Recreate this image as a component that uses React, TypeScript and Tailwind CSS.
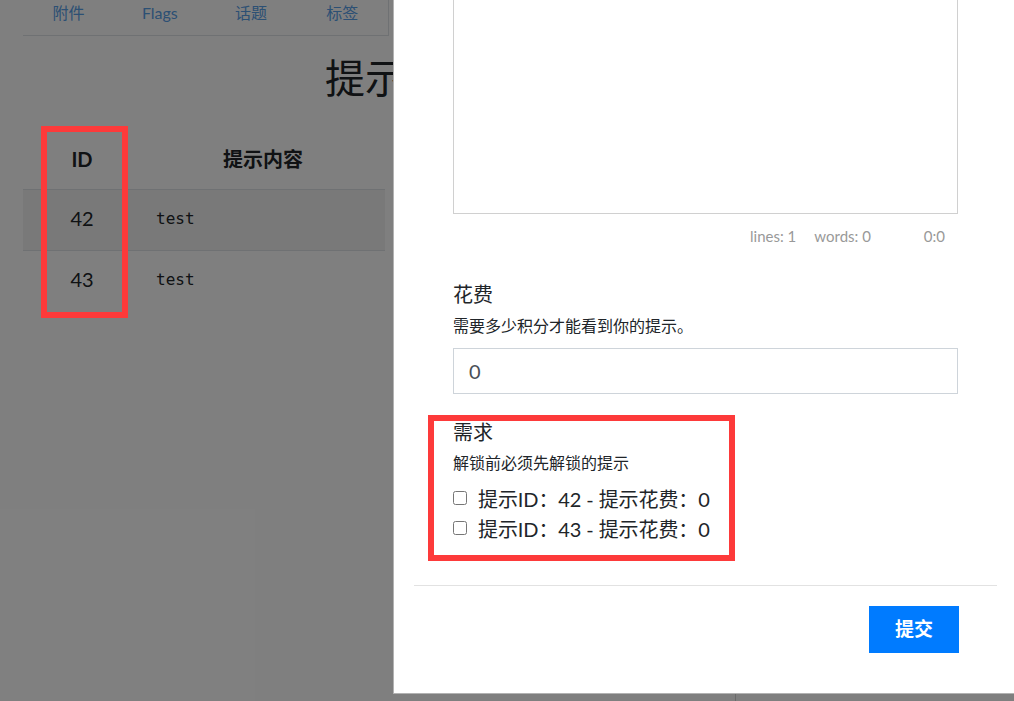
import React from "react";

const tabs = ["附件", "Flags", "话题", "标签"];
const hints = [
  { id: 42, content: "test", cost: 0 },
  { id: 43, content: "test", cost: 0 },
];

const sans = "font-['Lato','Noto_Sans_CJK_SC',sans-serif]";

export default function App() {
  return (
    <div className={`relative w-[1014px] h-[701px] overflow-hidden bg-white text-[#212529] ${sans}`}>
      {/* page behind the modal */}
      <div className="pl-[23px]">
        <div className="flex w-[366px] h-[36px] border-b border-r border-[#dee2e6]">
          {tabs.map((t) => (
            <div key={t} className="w-[91.5px] text-center text-[16px] leading-[26px] text-[#58a0e8]">
              {t}
            </div>
          ))}
        </div>
        <h1 className="mt-[20px] pl-[302px] text-[40px] leading-[44px] whitespace-nowrap">提示列表</h1>
        <table className="mt-[26px] text-[20px] border-collapse">
          <thead>
            <tr className="h-[63px] border-b border-[#dee2e6]">
              <th className="w-[118px] pt-[4px] text-center font-bold">ID</th>
              <th className="w-[244px] pt-[4px] text-center font-bold">提示内容</th>
            </tr>
          </thead>
          <tbody>
            {hints.map((h, i) => (
              <tr key={h.id} className={`h-[61px] ${i === 0 ? "bg-[#f2f2f2] border-b border-[#dee2e6]" : ""}`}>
                <td className="pb-[3px] text-center">{h.id}</td>
                <td className="pb-[1px] pl-[15px] font-['DejaVu_Sans_Mono',monospace] text-[16px]">{h.content}</td>
              </tr>
            ))}
          </tbody>
        </table>
      </div>
      <div className="absolute left-[735px] top-[690px] w-px h-[12px] bg-[#d4d4d4]" />

      {/* backdrop */}
      <div className="absolute inset-0 bg-black/50" />

      {/* modal */}
      <div className="absolute left-[393px] top-0 w-[624px] h-[694px] bg-white border-l border-b border-black/30">
        <div className="px-[59px]">
          <div className="-mt-px h-[215px] border border-[#d0d0d0]" />
          <div className="mt-[12px] flex justify-end pr-[13px] text-[15px] leading-[20px] text-[#999]">
            <span>lines: 1</span>
            <span className="ml-[18px]">words: 0</span>
            <span className="ml-[53px]">0:0</span>
          </div>

          <label className="block mt-[33px] text-[20px] leading-[30px]">花费</label>
          <div className="mt-[5px] text-[16px] leading-[24px]">需要多少积分才能看到你的提示。</div>
          <div className="mt-[10px] h-[46px] border border-[#ced4da] px-[15px] text-[20px] leading-[44px] text-[#495057]">
            0
          </div>

          <label className="block mt-[23px] text-[20px] leading-[30px]">需求</label>
          <div className="mt-[4px] text-[16px] leading-[24px]">解锁前必须先解锁的提示</div>
          <div className="mt-[9px]">
            {hints.map((h) => (
              <div key={h.id} className="flex items-center h-[30px] text-[20px]">
                <input type="checkbox" className="w-[14px] h-[14px] m-0 -mt-[2px]" />
                <span className="ml-[11px] whitespace-nowrap tracking-[-0.1px]">
                  提示ID：{h.id} - 提示花费：{h.cost}
                </span>
              </div>
            ))}
          </div>
        </div>

        <div className="mt-[41px] mx-[20px] border-t border-[#e2e2e2]" />
        <div className="flex justify-end pr-[58px] pt-[20px]">
          <button className="w-[90px] h-[47px] bg-[#007bff] text-white text-[19px] font-bold">提交</button>
        </div>
      </div>

      {/* annotation boxes */}
      <div className="absolute left-[41px] top-[126px] w-[87px] h-[192px] border-[6px] border-[#fd3a3a]" />
      <div className="absolute left-[428px] top-[415px] w-[307px] h-[146px] border-[6px] border-[#fd3a3a]" />
    </div>
  );
}
